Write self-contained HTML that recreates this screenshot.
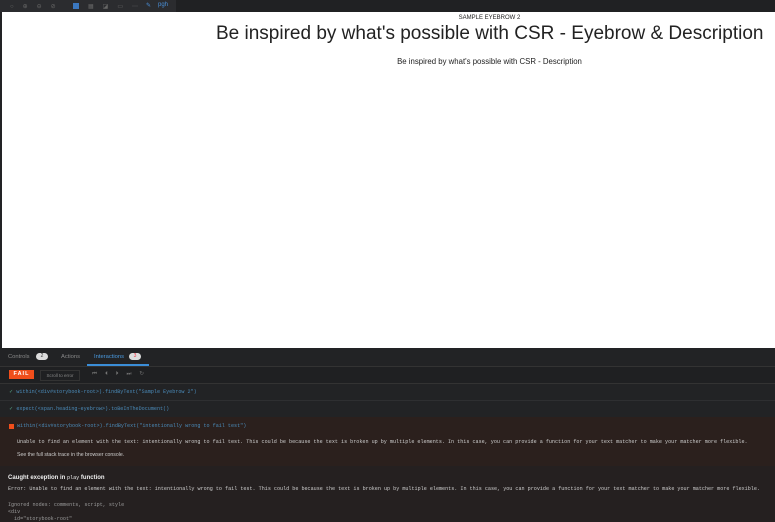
<html><head><style>
body{margin:0;width:775px;height:522px;overflow:hidden;background:#222325;font-family:"Liberation Sans",sans-serif;position:relative}
.a{position:absolute}
.mono{font-family:"Liberation Mono",monospace;font-size:5.1px;white-space:nowrap}
</style></head><body>
<div class="a" style="left:0;top:0;width:775px;height:12px;background:#202123"></div>
<div class="a" style="left:0;top:0;width:176px;height:12px;background:#2b2c2f"></div>
<div class="a" style="left:10px;top:3px;font-size:6px;color:#666;letter-spacing:9px">○⊕⊖⊘</div>
<div class="a" style="left:73px;top:3px;width:6px;height:6px;background:#3b78c0"></div>
<div class="a" style="left:88px;top:3px;font-size:6px;color:#666;letter-spacing:9px">▦◪▭⋯</div>
<div class="a" style="left:146px;top:2px;font-size:6px;color:#4a8fd8">✎</div>
<div class="a" style="left:158px;top:2px;font-size:6px;color:#4a8fd8">pgh</div>
<div class="a" style="left:2px;top:12px;width:773px;height:336px;background:#fff"></div>
<div class="a" style="left:0;top:15px;width:979px;text-align:center;font-size:6px;color:#222">SAMPLE EYEBROW 2</div>
<div class="a" style="left:216px;top:23px;font-size:19px;color:#222;white-space:nowrap">Be inspired by what's possible with CSR - Eyebrow &amp; Description</div>
<div class="a" style="left:0;top:57px;width:979px;text-align:center;font-size:7.8px;color:#222">Be inspired by what's possible with CSR - Description</div>
<div class="a" style="left:0;top:348px;width:775px;height:18px;background:#222325;border-bottom:1px solid #333"></div>
<div class="a" style="left:8px;top:354px;font-size:5.8px;color:#888">Controls</div>
<div class="a" style="left:36px;top:353px;width:12px;height:7px;border-radius:4px;background:#ddd;font-size:5px;text-align:center;color:#333">2</div>
<div class="a" style="left:61px;top:354px;font-size:5.8px;color:#888">Actions</div>
<div class="a" style="left:94px;top:354px;font-size:5.8px;color:#4a9ae0">Interactions</div>
<div class="a" style="left:129px;top:353px;width:12px;height:7px;border-radius:4px;background:#ddd;font-size:5px;text-align:center;color:#e34">3</div>
<div class="a" style="left:87px;top:364px;width:62px;height:2px;background:#3b8ed8"></div>
<div class="a" style="left:0;top:367px;width:775px;height:16px;background:#1f2022;border-bottom:1px solid #333"></div>
<div class="a" style="left:9px;top:370px;width:25px;height:9px;background:#f04e1b;color:#fff;font-size:5.5px;font-weight:bold;text-align:center;line-height:9px;letter-spacing:1px">FAIL</div>
<div class="a" style="left:40px;top:370px;width:38px;height:9px;border:1px solid #333;font-size:4.5px;color:#888;line-height:9px;text-align:center">Scroll to error</div>
<div class="a" style="left:92px;top:371px;font-size:5.5px;color:#777;letter-spacing:8px">⏮⏴⏵⏭↻</div>
<div class="a mono" style="left:9px;top:389px;color:#4a8ab8"><span style="color:#5a8">✓</span> within(&lt;div#storybook-root&gt;).findByText("Sample Eyebrow 2")</div>
<div class="a" style="left:0;top:400px;width:775px;height:1px;background:#2e2f31"></div>
<div class="a mono" style="left:9px;top:406px;color:#4a8ab8"><span style="color:#5a8">✓</span> expect(&lt;span.heading-eyebrow&gt;).toBeInTheDocument()</div>
<div class="a" style="left:0;top:417px;width:775px;height:105px;background:#2b201d"></div>
<div class="a" style="left:9px;top:424px;width:5px;height:5px;background:#f04e1b"></div>
<div class="a mono" style="left:17px;top:423px;color:#4a8ab8">within(&lt;div#storybook-root&gt;).findByText("intentionally wrong to fail test")</div>
<div class="a mono" style="left:17px;top:439px;color:#ccc">Unable to find an element with the text: intentionally wrong to fail test. This could be because the text is broken up by multiple elements. In this case, you can provide a function for your text matcher to make your matcher more flexible.</div>
<div class="a" style="left:17px;top:452px;font-size:5.2px;color:#ccc">See the full stack trace in the browser console.</div>
<div class="a" style="left:0;top:466px;width:775px;height:56px;background:#252020"></div>
<div class="a" style="left:8px;top:475px;font-size:6px;color:#eee;font-weight:bold">Caught exception in <span class="mono" style="font-weight:normal">play</span> function</div>
<div class="a mono" style="left:8px;top:486px;color:#ccc">Error: Unable to find an element with the text: intentionally wrong to fail test. This could be because the text is broken up by multiple elements. In this case, you can provide a function for your text matcher to make your matcher more flexible.</div>
<div class="a mono" style="left:8px;top:502px;color:#999">Ignored nodes: comments, script, style</div>
<div class="a mono" style="left:8px;top:509px;color:#999">&lt;div</div>
<div class="a mono" style="left:14px;top:516px;color:#999">id="storybook-root"</div>
</body></html>
